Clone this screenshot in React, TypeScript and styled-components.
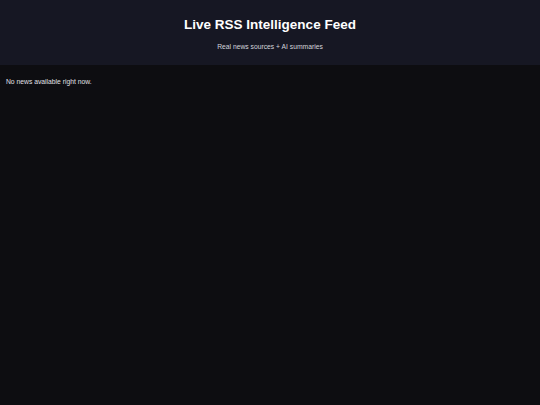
import React from "react";
import styled, { createGlobalStyle } from "styled-components";

const Global = createGlobalStyle`
  html, body { margin: 0; padding: 0; background: #0d0d11; }
  body { font-family: "Liberation Sans", Arial, sans-serif; color: #e6e6ea; }
`;

const Page = styled.div`
  min-height: 405px;
  background: #0d0d11;
  display: flex;
  flex-direction: column;
`;

const Header = styled.header`
  height: 65px;
  box-sizing: border-box;
  background: #161723;
  display: flex;
  flex-direction: column;
  align-items: center;
  padding-top: 17px;
`;

const Title = styled.h1`
  margin: 0;
  font-size: 13.5px;
  font-weight: 700;
  color: #ffffff;
  line-height: 16px;
`;

const Subtitle = styled.p`
  margin: 9px 0 0;
  font-size: 6.75px;
  color: #d4d4dc;
  line-height: 9px;
`;

const Main = styled.main`
  padding: 12px 6px;
`;

const Empty = styled.p`
  margin: 0;
  font-size: 6.75px;
  color: #e0e0e6;
  line-height: 9px;
`;

export default function App() {
  return (
    <>
      <Global />
      <Page>
        <Header>
          <Title>Live RSS Intelligence Feed</Title>
          <Subtitle>Real news sources + AI summaries</Subtitle>
        </Header>
        <Main>
          <Empty>No news available right now.</Empty>
        </Main>
      </Page>
    </>
  );
}
